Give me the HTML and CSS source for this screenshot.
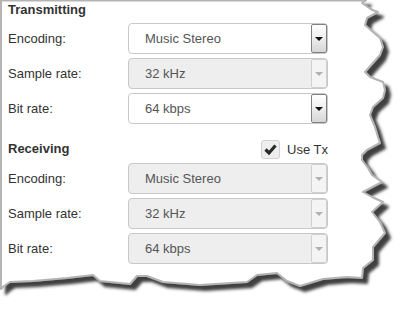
FILE: index.html
```html
<!DOCTYPE html>
<html lang="en">
<head>
  <meta charset="UTF-8" />
  <title>Audio Settings</title>
  <meta name="viewport" content="width=device-width, initial-scale=1.0" />
  <link rel="stylesheet" href="styles.css">
</head>
<body>

  <div class="sheet">
    <!-- torn paper edge, drawn behind the form -->
    <svg class="paper" width="408" height="318" viewBox="0 0 408 318">
      <defs>
        <filter id="tear" x="-5%" y="-5%" width="115%" height="115%">
          <feDropShadow dx="5" dy="5" stdDeviation="1.4" flood-color="#404040" flood-opacity="1" />
        </filter>
      </defs>
      <path filter="url(#tear)" fill="#fff" stroke="#b4b4b4" stroke-width="2" stroke-linejoin="round"
        d="M1,0.5 L366,0.5 L362,3 L372,10 L378,12 L367,18 L365,25 L373,32 L380,38 L383,47 L380,55 L373,63
           L365,72 L370,77 L383,82 L385,90 L383,98 L373,107 L370,115 L375,127 L378,137 L380,143 L367,150
           L362,155 L362,160 L368,168 L372,175 L382,182 L363,192 L372,197 L383,202 L372,212 L380,222
           L385,233 L373,247 L373,260 L363,268 L362,278 L347,277 L323,279 L300,286 L287,281 L277,273
           L257,275 L247,282 L200,285 L163,282 L147,276 L137,276 L130,284 L100,281 L93,275 L67,278
           L33,281 L10,282 L4,286 L1,289 Z" />
    </svg>

    <div class="panel">
      <h2 class="section-title">Transmitting</h2>

      <div class="field">
        <label>Encoding:</label>
        <div class="select">
          <span class="value">Music Stereo</span>
          <span class="arrow"><i class="caret"></i></span>
        </div>
      </div>
      <div class="field">
        <label>Sample rate:</label>
        <div class="select disabled">
          <span class="value">32 kHz</span>
          <span class="arrow"><i class="caret"></i></span>
        </div>
      </div>
      <div class="field">
        <label>Bit rate:</label>
        <div class="select">
          <span class="value">64 kbps</span>
          <span class="arrow"><i class="caret"></i></span>
        </div>
      </div>

      <div class="section-row">
        <h2 class="section-title">Receiving</h2>
        <label class="check">
          <span class="box">
            <svg width="19" height="19" viewBox="0 0 19 19"><path d="M4.5 9.5 L8 13 L14.5 5.5" fill="none" stroke="#2a2a2a" stroke-width="3.2" /></svg>
          </span>
          Use Tx
        </label>
      </div>

      <div class="field">
        <label>Encoding:</label>
        <div class="select disabled">
          <span class="value">Music Stereo</span>
          <span class="arrow"><i class="caret"></i></span>
        </div>
      </div>
      <div class="field">
        <label>Sample rate:</label>
        <div class="select disabled">
          <span class="value">32 kHz</span>
          <span class="arrow"><i class="caret"></i></span>
        </div>
      </div>
      <div class="field">
        <label>Bit rate:</label>
        <div class="select disabled">
          <span class="value">64 kbps</span>
          <span class="arrow"><i class="caret"></i></span>
        </div>
      </div>
    </div>
  </div>

</body>
</html>
```

FILE: styles.css
```css
:root {
  --text-color: #333;
  --value-color: #555;
  --border: #c8c8c8;
  --disabled-bg: #eeeeee;
  --font: 'Liberation Sans', Arial, sans-serif;
}

* {
  margin: 0;
  padding: 0;
  box-sizing: border-box;
}

html, body {
  width: 408px;
  height: 318px;
  background: #fff;
  font-family: var(--font);
  font-size: 13px;
  color: var(--text-color);
  overflow: hidden;
}

.sheet {
  position: relative;
  width: 408px;
  height: 318px;
}

.paper {
  position: absolute;
  left: 0;
  top: 0;
  z-index: 0;
}

.panel {
  position: relative;
  z-index: 1;
  width: 328px;
  padding: 2px 0 0 8px;
}

.section-title {
  font-size: 13px;
  font-weight: bold;
  line-height: 16px;
  margin-bottom: 5px;
}

.field {
  display: grid;
  grid-template-columns: 120px 200px;
  align-items: center;
  height: 31px;
  margin-bottom: 4px;
  line-height: 16px;
}

.select {
  display: flex;
  height: 31px;
  border: 1px solid var(--border);
  border-radius: 4px;
  background: #fff;
}

.select .value {
  flex: 1;
  padding-left: 16px;
  line-height: 29px;
  color: var(--value-color);
}

.select .arrow {
  width: 16px;
  display: flex;
  align-items: center;
  justify-content: center;
  border: 1px solid #808080;
  border-radius: 2px;
  background: linear-gradient(#ffffff, #f2f2f2 40%, #d6d6d6);
}

.caret {
  width: 0;
  height: 0;
  border-left: 4px solid transparent;
  border-right: 4px solid transparent;
  border-top: 4px solid #111;
}

.select.disabled {
  background: var(--disabled-bg);
}

.select.disabled .arrow {
  border-color: #d0d0d0;
  background: #f4f4f4;
}

.select.disabled .caret {
  border-top-color: #b0b0b0;
}

/* margin-top collapses with the field's 4px bottom margin */
.section-row {
  display: flex;
  justify-content: space-between;
  align-items: center;
  height: 19px;
  margin: 16px 0 4px;
}

.section-row .section-title {
  margin: 0 0 2px;
}

.check {
  display: flex;
  align-items: center;
  gap: 7px;
  line-height: 16px;
  color: var(--text-color);
}

.check .box {
  width: 19px;
  height: 19px;
  border: 1px solid #d2d2d2;
  border-radius: 3px;
  background: #eee;
  display: flex;
}

.check .box svg {
  margin: -1px;
}
```
